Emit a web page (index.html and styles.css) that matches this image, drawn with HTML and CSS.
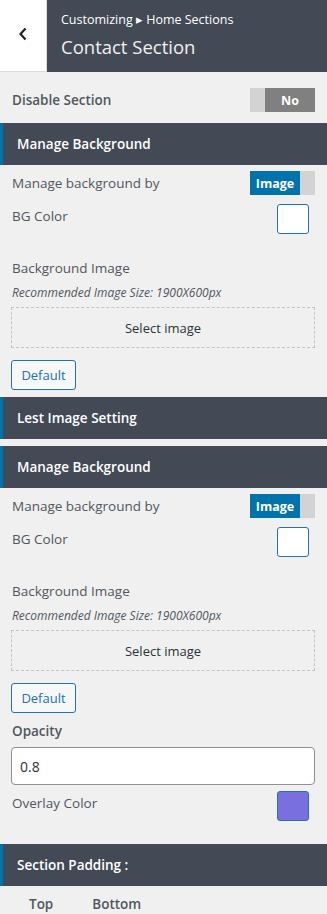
FILE: index.html
```html
<!DOCTYPE html>
<html lang="en">
<head>
    <meta charset="UTF-8">
    <meta name="viewport" content="width=device-width, initial-scale=1.0">
    <title>Contact Section</title>
    <link rel="stylesheet" href="styles.css">
</head>
<body>
    <div class="panel-header">
        <button class="back-button" aria-label="Back">
            <svg width="10" height="14" viewBox="0 0 10 14"><polyline points="7.5,1.5 2.5,7 7.5,12.5" fill="none" stroke="#1d2327" stroke-width="2.2"/></svg>
        </button>
        <div class="panel-title">
            <span class="breadcrumb">Customizing &#9656; Home Sections</span>
            <h1>Contact Section</h1>
        </div>
    </div>

    <div class="controls">
        <div class="row row-disable">
            <span class="label strong">Disable Section</span>
            <div class="toggle toggle-off"><span class="knob"></span><span class="state">No</span></div>
        </div>

        <div class="section-title first">Manage Background</div>
        <div class="row row-toggle">
            <span class="label">Manage background by</span>
            <div class="toggle toggle-on"><span class="state">Image</span><span class="knob"></span></div>
        </div>
        <div class="row row-color">
            <span class="label">BG Color</span>
            <span class="swatch"></span>
        </div>
        <div class="image-field">
            <span class="label">Background Image</span>
            <span class="hint">Recommended Image Size: 1900X600px</span>
            <button class="select-image">Select image</button>
            <button class="default-btn">Default</button>
        </div>

        <div class="section-title">Lest Image Setting</div>
        <div class="section-title">Manage Background</div>
        <div class="row row-toggle">
            <span class="label">Manage background by</span>
            <div class="toggle toggle-on"><span class="state">Image</span><span class="knob"></span></div>
        </div>
        <div class="row row-color">
            <span class="label">BG Color</span>
            <span class="swatch"></span>
        </div>
        <div class="image-field">
            <span class="label">Background Image</span>
            <span class="hint">Recommended Image Size: 1900X600px</span>
            <button class="select-image">Select image</button>
            <button class="default-btn">Default</button>
        </div>

        <div class="opacity-field">
            <label class="label strong" for="opacity">Opacity</label>
            <input type="text" id="opacity" value="0.8">
        </div>
        <div class="row row-overlay">
            <span class="label">Overlay Color</span>
            <span class="swatch overlay"></span>
        </div>

        <div class="section-title padding-title">Section Padding :</div>
        <div class="padding-labels">
            <span>Top</span>
            <span>Bottom</span>
        </div>
    </div>
</body>
</html>
```

FILE: styles.css
```css
body {
    margin: 0;
    background-color: #f0f0f0;
    font-family: "Open Sans", "Noto Sans", sans-serif;
    font-size: 13px;
    color: #50575e;
    width: 327px;
    height: 914px;
    overflow: hidden;
}
.panel-header {
    display: flex;
    height: 72px;
}
.back-button {
    width: 47px;
    height: 72px;
    padding: 0 0 4px 0;
    background-color: #fff;
    border: none;
    border-right: 1px solid #dcdcde;
    border-bottom: 1px solid #dcdcde;
    box-sizing: border-box;
    display: flex;
    align-items: center;
    justify-content: center;
}
.panel-title {
    flex: 1;
    background-color: #434a56;
    padding: 10px 14px 0 14px;
}
.breadcrumb {
    display: block;
    color: #fff;
    font-size: 12.5px;
    line-height: 20px;
}
.panel-title h1 {
    margin: 4px 0 0 0;
    font-size: 18.5px;
    font-weight: 400;
    line-height: 26px;
    color: #f0f0f1;
}
.controls {
    padding: 0 12px;
}
.row {
    display: flex;
    justify-content: space-between;
}
.label {
    font-size: 13.5px;
    line-height: 20px;
}
.strong {
    font-weight: 600;
}
.row-disable {
    margin-top: 16px;
    align-items: center;
}
.toggle {
    display: flex;
    width: 65px;
    height: 24px;
    font-weight: 700;
    font-size: 12.5px;
    color: #fff;
}
.toggle .knob {
    width: 15px;
    background-color: #d3d3d3;
}
.toggle .state {
    flex: 1;
    display: flex;
    align-items: center;
    justify-content: center;
}
.toggle-off .state {
    background-color: #808080;
}
.toggle-on .state {
    background-color: #0073aa;
}
.section-title {
    margin: 7px -12px 0 -12px;
    height: 42px;
    padding-left: 14px;
    background-color: #434a56;
    border-left: 3px solid #0073aa;
    box-sizing: border-box;
    display: flex;
    align-items: center;
    color: #fff;
    font-weight: 600;
    font-size: 13.5px;
}
.section-title.first {
    margin-top: 11px;
}
.row-toggle {
    margin-top: 6px;
    align-items: center;
}
.row-color {
    margin-top: 9px;
}
.row-color .label,
.row-overlay .label {
    padding-top: 2px;
}
.swatch {
    width: 32px;
    height: 30px;
    margin-right: 6px;
    box-sizing: border-box;
    background-color: #fff;
    border: 1px solid #2271b1;
    border-radius: 3px;
}
.swatch.overlay {
    background-color: #7a6fde;
    border-color: #2271b1;
}
.image-field {
    display: flex;
    flex-direction: column;
    align-items: flex-start;
    margin-top: 24px;
}
.hint {
    margin-top: 6px;
    font-style: italic;
    font-size: 12px;
    line-height: 18px;
}
.select-image {
    margin-top: 5px;
    margin-left: -1px;
    width: calc(100% + 1px);
    height: 41px;
    border: 1px dashed #c3c4c7;
    background: none;
    font-family: inherit;
    font-size: 13px;
    color: #2c3338;
}
.default-btn {
    margin-top: 12px;
    margin-left: -1px;
    width: 65px;
    height: 30px;
    padding: 0;
    background-color: #f6f7f7;
    border: 1px solid #2271b1;
    border-radius: 3px;
    color: #2271b1;
    font-family: inherit;
    font-size: 13px;
}
.opacity-field {
    margin-top: 8px;
    display: flex;
    flex-direction: column;
}
.opacity-field input {
    margin-top: 6px;
    margin-left: -1px;
    height: 38px;
    padding: 0 8px;
    box-sizing: border-box;
    border: 1px solid #8c8f94;
    border-radius: 4px;
    background-color: #fff;
    font-family: inherit;
    font-size: 14px;
    color: #2c3338;
}
.row-overlay {
    margin-top: 6px;
}
.padding-title {
    margin-top: 23px;
}
.padding-labels {
    display: flex;
    gap: 39px;
    padding-left: 17px;
    margin-top: 8px;
    font-weight: 600;
    font-size: 13.5px;
    line-height: 20px;
}
```
